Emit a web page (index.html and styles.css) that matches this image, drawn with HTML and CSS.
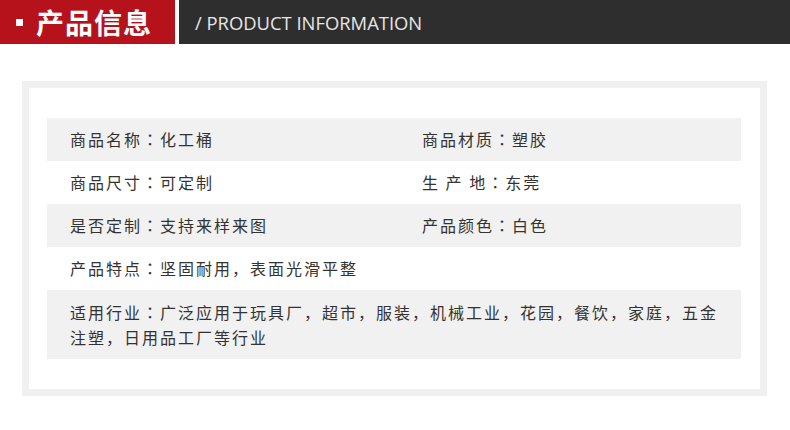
FILE: index.html
```html
<!DOCTYPE html>
<html lang="zh-CN">
<head>
<meta charset="utf-8">
<title>产品信息</title>
<link rel="stylesheet" href="styles.css">
</head>
<body>
<header class="banner">
  <div class="banner-title"><span class="bullet"></span><h1>产品信息</h1></div>
  <div class="banner-sub">/ PRODUCT INFORMATION</div>
</header>
<section class="frame">
  <div class="table">
    <div class="row shaded">
      <div class="cell">商品名称<span class="colon" lang="zh-TW">：</span>化工桶</div>
      <div class="cell right">商品材质<span class="colon" lang="zh-TW">：</span>塑胶</div>
    </div>
    <div class="row">
      <div class="cell">商品尺寸<span class="colon" lang="zh-TW">：</span>可定制</div>
      <div class="cell right">生 产 地<span class="colon" lang="zh-TW">：</span>东莞</div>
    </div>
    <div class="row shaded">
      <div class="cell">是否定制<span class="colon" lang="zh-TW">：</span>支持来样来图</div>
      <div class="cell right">产品颜色<span class="colon" lang="zh-TW">：</span>白色</div>
    </div>
    <div class="row">
      <div class="cell wide">产品特点<span class="colon" lang="zh-TW">：</span>坚固耐用，表面光滑平整</div>
    </div>
    <div class="row shaded">
      <div class="cell wide full">适用行业<span class="colon" lang="zh-TW">：</span>广泛应用于玩具厂，超市，服装，机械工业，花园，餐饮，家庭，五金注塑，日用品工厂等行业</div>
    </div>
  </div>
</section>
</body>
</html>
```
FILE: styles.css
```css
* { box-sizing: border-box; }
body {
  margin: 0;
  background: #fff;
  font-family: "Noto Sans CJK SC", "Noto Sans", sans-serif;
}
.banner {
  display: flex;
  height: 44px;
  gap: 4px;
}
.banner-title {
  width: 175px;
  background: #b5121b;
  display: flex;
  align-items: center;
  padding-left: 16px;
}
.bullet {
  width: 7px;
  height: 7px;
  background: #fff;
  margin-right: 13px;
}
.banner-title h1 {
  margin: 0;
  color: #fff;
  font-size: 28px;
  font-weight: 700;
  letter-spacing: 1px;
  line-height: 44px;
}
.banner-sub {
  flex: 1;
  background: #2e2e2e;
  color: #e6e6e6;
  display: flex;
  align-items: center;
  padding-left: 16px;
  font-family: "Open Sans", "Noto Sans", sans-serif;
  font-weight: 400;
  font-size: 18.4px;
}
.frame {
  margin: 37px 0 0 22px;
  width: 745px;
  border: 7px solid #f0f0f0;
  padding: 30px 19px 30px 18px;
}
.row {
  display: grid;
  grid-template-columns: 353px 1fr;
}
.row.shaded { background: #f1f1f1; }
.cell {
  padding: 9px 0 9px 23px;
  line-height: 25px;
  font-size: 16px;
  letter-spacing: 2px;
  color: #333;
}
.colon { font-family: "Noto Sans CJK TC", "Noto Sans CJK SC", sans-serif; }
.cell.right { padding-left: 22px; }
.cell.wide { grid-column: 1 / -1; }
.cell.full { padding: 10px 16px 9px 23px; }
```
